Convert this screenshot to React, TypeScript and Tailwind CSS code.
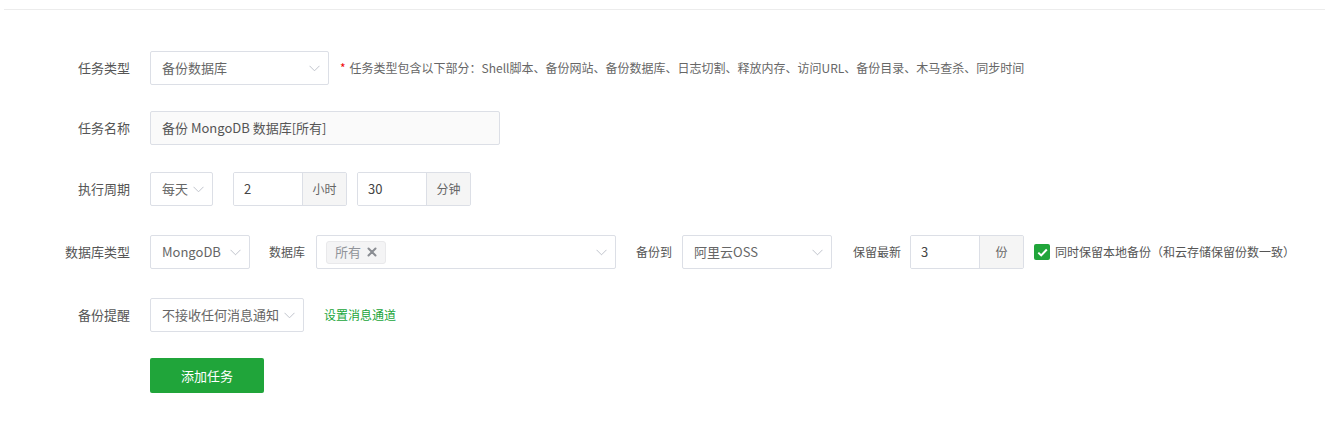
import React from "react";

const font = { fontFamily: '"Microsoft YaHei", "Noto Sans CJK SC", "Noto Sans", sans-serif' };

function Chevron() {
  return (
    <svg width="11" height="7" viewBox="0 0 11 7" className="shrink-0">
      <polyline points="0.5,0.8 5.5,5.8 10.5,0.8" fill="none" stroke="#c0c4cc" strokeWidth="1" />
    </svg>
  );
}

function Select({ value, className }: { value: string; className: string }) {
  return (
    <div
      className={`h-[34px] flex items-center justify-between pl-[11px] pr-[8px] border border-[#dcdfe6] rounded-[2px] bg-white text-[13px] text-[#666] ${className}`}
    >
      <span className="whitespace-nowrap">{value}</span>
      <Chevron />
    </div>
  );
}

function AddonInput({ value, unit }: { value: string; unit: string }) {
  return (
    <div className="h-[34px] flex border border-[#dcdfe6] rounded-[2px] overflow-hidden">
      <div className="w-[68px] flex items-center pl-[10px] text-[13px] text-[#444] bg-white">{value}</div>
      <div className="w-[44px] flex items-center justify-center border-l border-[#dcdfe6] bg-[#f5f5f5] text-[12px] text-[#666]">
        {unit}
      </div>
    </div>
  );
}

function Row({ label, children, className }: { label: string; children: React.ReactNode; className: string }) {
  return (
    <div className={`flex items-center ${className}`}>
      <div className="w-[130px] text-right text-[13px] text-[#555]">{label}</div>
      <div className="ml-[20px] flex items-center">{children}</div>
    </div>
  );
}

export default function App() {
  return (
    <div className="min-h-screen bg-white" style={font}>
      <div className="mx-[4px] h-[10px] border-b border-[#ececec]" />
      <div className="pt-[41px]">
        <Row label="任务类型" className="">
          <Select value="备份数据库" className="w-[179px]" />
          <span className="ml-[11px] text-[12px] text-[#666] whitespace-nowrap">
            <span className="text-[#ef0808] mr-[4px]">*</span>
            任务类型包含以下部分：Shell脚本、备份网站、备份数据库、日志切割、释放内存、访问URL、备份目录、木马查杀、同步时间
          </span>
        </Row>

        <Row label="任务名称" className="mt-[26px]">
          <div className="w-[350px] h-[34px] flex items-center pl-[11px] border border-[#dcdfe6] rounded-[2px] bg-[#fafafa] text-[13px] text-[#555]">
            备份 MongoDB 数据库[所有]
          </div>
        </Row>

        <Row label="执行周期" className="mt-[27px]">
          <Select value="每天" className="w-[63px]" />
          <div className="ml-[20px]">
            <AddonInput value="2" unit="小时" />
          </div>
          <div className="ml-[10px]">
            <AddonInput value="30" unit="分钟" />
          </div>
        </Row>

        <Row label="数据库类型" className="mt-[29px]">
          <Select value="MongoDB" className="w-[100px]" />
          <span className="ml-[19px] text-[12px] text-[#555] whitespace-nowrap">数据库</span>
          <div className="ml-[11px] w-[300px] h-[34px] flex items-center justify-between pl-[9px] pr-[8px] border border-[#dcdfe6] rounded-[2px] bg-white">
            <div className="h-[23px] flex items-center gap-[6px] px-[8px] rounded-[3px] bg-[#f4f4f5] border border-[#e9e9eb] text-[13px] text-[#909399]">
              所有
              <svg width="10" height="10" viewBox="0 0 10 10">
                <path d="M1.5 1.5 L8.5 8.5 M8.5 1.5 L1.5 8.5" stroke="#8a8d93" strokeWidth="2" strokeLinecap="round" />
              </svg>
            </div>
            <Chevron />
          </div>
          <span className="ml-[20px] text-[12px] text-[#555] whitespace-nowrap">备份到</span>
          <Select value="阿里云OSS" className="ml-[10px] w-[150px]" />
          <span className="ml-[21px] text-[12px] text-[#555] whitespace-nowrap">保留最新</span>
          <div className="ml-[9px]">
            <AddonInput value="3" unit="份" />
          </div>
          <div className="ml-[10px] w-[16px] h-[16px] rounded-[2px] bg-[#20a53a] flex items-center justify-center">
            <svg width="11" height="9" viewBox="0 0 11 9">
              <polyline points="1.3,4.6 4.2,7.4 9.8,1.5" fill="none" stroke="#fff" strokeWidth="2" />
            </svg>
          </div>
          <span className="ml-[5px] text-[12px] text-[#555] whitespace-nowrap">同时保留本地备份（和云存储保留份数一致）</span>
        </Row>

        <Row label="备份提醒" className="mt-[29px]">
          <Select value="不接收任何消息通知" className="w-[154px]" />
          <span className="ml-[20px] text-[12px] text-[#20a53a] whitespace-nowrap">设置消息通道</span>
        </Row>

        <div className="mt-[26px] ml-[150px]">
          <button className="w-[114px] h-[35px] rounded-[2px] bg-[#20a53a] text-white text-[13px]">添加任务</button>
        </div>
      </div>
    </div>
  );
}
